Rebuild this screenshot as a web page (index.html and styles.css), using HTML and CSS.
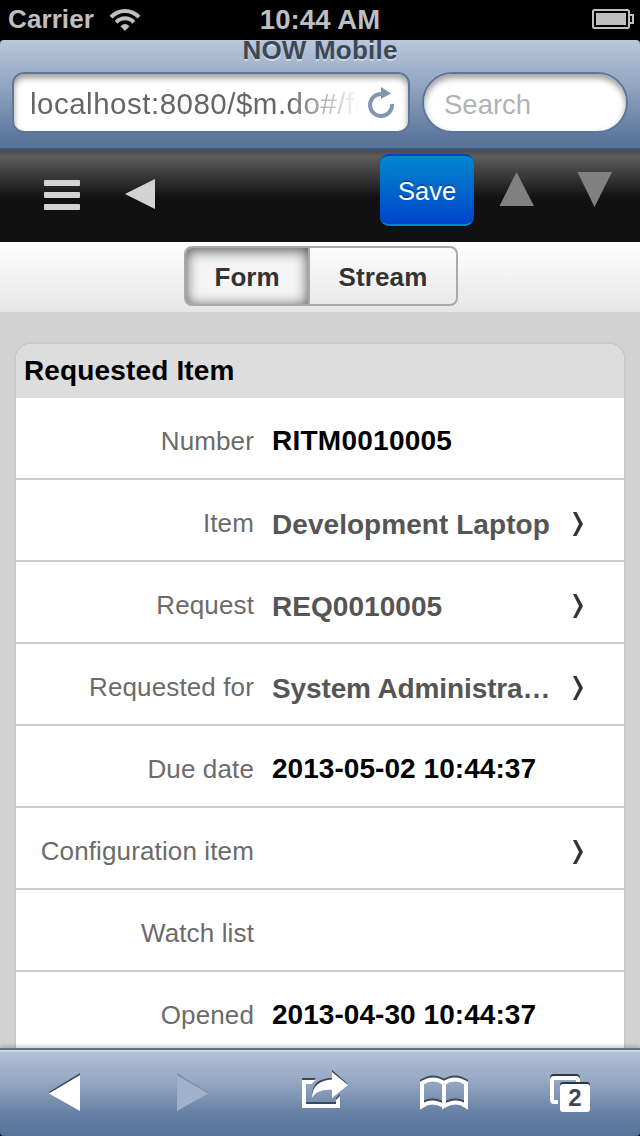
FILE: index.html
```
<!DOCTYPE html>
<html lang="en">
<head>
<meta charset="utf-8">
<title>NOW Mobile</title>
<link rel="stylesheet" href="styles.css">
</head>
<body>
<div class="screen">
  <header class="status">
    <div class="status-left"><span class="carrier">Carrier</span>
      <svg class="wifi" width="32" height="24" viewBox="0 0 32 24"><g fill="none" stroke="#bfbfbf" stroke-width="4"><path d="M2 9.2C9.500 .8 22.500 .8 30 9.200"/><path d="M7.200 14.300C12 9 20 9 24.800 14.300"/></g><path fill="#bfbfbf" d="M11.500 18.200Q16 13.800 20.500 18.200L16 23z"/></svg>
    </div>
    <span class="clock">10:44 AM</span>
    <svg class="battery" width="42" height="20" viewBox="0 0 42 20"><rect x="1" y="1" width="36" height="18" rx="1.500" fill="none" stroke="#bfbfbf" stroke-width="2"/><rect x="4" y="4" width="30" height="12" fill="#bfbfbf"/><path d="M38 6h3v8h-3" fill="none" stroke="#bfbfbf" stroke-width="2"/></svg>
  </header>
  <section class="chrome">
    <div class="page-title"><span>NOW Mobile</span></div>
    <div class="fields">
      <div class="field url"><span class="url-text">localhost:8080/$m.do#/fo</span>
        <svg class="reload" width="28" height="32" viewBox="0 0 28 32"><path d="M14 7A11 11 0 1 0 25 17" fill="none" stroke="#8196b0" stroke-width="4"/><path d="M14 0L24 6.500L14 12z" fill="#8196b0"/></svg>
      </div>
      <div class="field search"><span>Search</span></div>
    </div>
  </section>
  <nav class="toolbar">
    <svg class="menu" width="36" height="30" viewBox="0 0 36 30" fill="#d3d3d3"><rect width="36" height="6" rx="1"/><rect y="12" width="36" height="6" rx="1"/><rect y="24" width="36" height="6" rx="1"/></svg>
    <svg class="back" width="30" height="30" viewBox="0 0 30 30"><path d="M0 15L30 0V30z" fill="#d3d3d3"/></svg>
    <div class="save">Save</div>
    <svg class="up" width="36" height="36" viewBox="0 0 36 36"><path d="M.5 34L17.500 0L35 34z" fill="#808080"/></svg>
    <svg class="down" width="36" height="36" viewBox="0 0 36 36"><path d="M.5 0L17.500 35L35 0z" fill="#808080"/></svg>
  </nav>
  <div class="tabs"><div class="segments"><div class="tab active"><span>Form</span></div><div class="tab stream"><span>Stream</span></div></div></div>
  <main class="content">
    <section class="card">
      <h2><span>Requested Item</span></h2>
      <div class="row"><div class="label"><span>Number</span></div><div class="value"><span class="code">RITM0010005</span></div></div>
      <div class="row link"><div class="label"><span>Item</span></div><div class="value"><span>Development Laptop</span></div><svg class="chevron" width="12" height="24" viewBox="0 0 12 24"><path d="M0 0H3.500L10 12L3.500 24H0L6 12z"/></svg></div>
      <div class="row link"><div class="label"><span>Request</span></div><div class="value"><span>REQ0010005</span></div><svg class="chevron" width="12" height="24" viewBox="0 0 12 24"><path d="M0 0H3.500L10 12L3.500 24H0L6 12z"/></svg></div>
      <div class="row link"><div class="label"><span>Requested for</span></div><div class="value"><span class="person">System Administra…</span></div><svg class="chevron" width="12" height="24" viewBox="0 0 12 24"><path d="M0 0H3.500L10 12L3.500 24H0L6 12z"/></svg></div>
      <div class="row"><div class="label"><span>Due date</span></div><div class="value"><span>2013-05-02 10:44:37</span></div></div>
      <div class="row link"><div class="label"><span>Configuration item</span></div><div class="value"></div><svg class="chevron" width="12" height="24" viewBox="0 0 12 24"><path d="M0 0H3.500L10 12L3.500 24H0L6 12z"/></svg></div>
      <div class="row"><div class="label"><span>Watch list</span></div><div class="value"></div></div>
      <div class="row"><div class="label"><span>Opened</span></div><div class="value"><span>2013-04-30 10:44:37</span></div></div>
    </section>
  </main>
  <footer class="bottom">
    <div class="tool"><svg width="32" height="40" viewBox="0 0 32 40"><path d="M1 19L32 0V10L4 21z" fill="#3c4858"/><path d="M1 20.500L32 2V38z" fill="#fff"/></svg></div>
    <div class="tool"><svg width="32" height="40" viewBox="0 0 32 40"><path d="M1 0L31 19V21L1 4z" fill="#788ba8"/><path d="M1 2L32 20.500L1 38z" fill="#a1b1c9"/></svg></div>
    <div class="tool share"><svg width="48" height="40" viewBox="0 0 48 40"><g fill="#3c4858"><path d="M2 8H16L12 12H6V32H36V28L40 24V36H2z"/><path d="M12 26C12 14 19 8 32 8V0L48 14L32 26V18C22 17 15 19 12 26z"/></g><g fill="#fff"><path d="M2 10H15.500L11.500 14H6V34H36V30L40 26V38H2z"/><path d="M12 28C12 16 20 10 32 9.500V2L48 15L32 28V20C23 19 15 22 12 28z"/></g></svg></div>
    <div class="tool book"><svg width="48" height="36" viewBox="0 0 48 36"><g fill="none" stroke-width="4"><path stroke="#3c4858" d="M24 29Q12 22 2 29V6Q13-1 24 6Q35-1 46 6V29Q36 22 24 29V6"/><path stroke="#fff" d="M24 31Q12 24 2 31V8Q13 1 24 8Q35 1 46 8V31Q36 24 24 31V8"/></g></svg></div>
    <div class="tool pages"><svg width="40" height="40" viewBox="0 0 40 40"><path d="M2 26V4Q2 2 4 2H26Q28 2 28 4V8" fill="none" stroke="#2e3540" stroke-width="4"/><path d="M8 28H4Q2 28 2 26V6Q2 4 4 4H26Q28 4 28 6V8" fill="none" stroke="#fff" stroke-width="4"/><rect x="10" y="8" width="30" height="29" rx="3" fill="#2e3540"/><rect x="10" y="10" width="30" height="28" rx="3" fill="#fff"/><text x="25" y="32" class="count" text-anchor="middle">2</text></svg></div>
  </footer>
</div>
</body>
</html>
```
FILE: styles.css
```
* { box-sizing: border-box; }
body { margin: 0; background: #000; font-family: "Liberation Sans", Arial, sans-serif; }
svg { display: block; flex: none; }
span { white-space: nowrap; }
.screen { width: 640px; height: 1136px; display: flex; flex-direction: column; overflow: hidden; background: #000; }
.status { flex: none; height: 40px; display: grid; grid-template-columns: 1fr auto 1fr; align-items: center; padding: 0 6px 2px 8px; color: #bfbfbf; font-size: 26px; font-weight: bold; }
.status-left { display: flex; align-items: center; gap: 15px; letter-spacing: .1px; padding-top: 1px; }
.clock { font-size: 27.5px; letter-spacing: .1px; padding: 1px 2px 0 0; }
.battery { justify-self: end; }
.chrome { flex: none; height: 110px; border-radius: 4px 4px 0 0; background: linear-gradient(#b9c8dc, #8fa3bf 45%, #5b759b 92%, #58739a); border-bottom: 2px solid #3a5880; }
.page-title { height: 32px; line-height: 20px; text-align: center; font-size: 26px; font-weight: bold; letter-spacing: .2px; color: #3c4854; text-shadow: 0 2px 0 rgba(255,255,255,.45); }
.fields { display: flex; gap: 12px; padding: 0 12px; }
.field { height: 61px; border: 2px solid #5c7699; background: #fff; box-shadow: inset 0 4px 6px rgba(0,0,0,.4); display: flex; align-items: center; }
.url { width: 398px; border-radius: 12px; padding-left: 16px; font-size: 29.5px; color: #666; }
.url-text { width: 330px; padding-top: 3px; overflow: hidden; flex: none; letter-spacing: .5px; -webkit-mask-image: linear-gradient(90deg, #000 78%, transparent 100%); mask-image: linear-gradient(90deg, #000 78%, transparent 100%); }
.reload { margin: 1px 0 0 7px; }
.search { width: 206px; border-radius: 31px; padding: 4px 0 0 20px; font-size: 27.5px; color: #b3b3b3; }
.toolbar { flex: none; height: 92px; background: linear-gradient(#4a4a4a, #5c5c5c 7%, #111 52%, #111); display: flex; align-items: flex-start; }
.menu { margin: 30px 0 0 44px; }
.back { margin: 29px 0 0 45px; }
.save { width: 94px; height: 72px; margin: 4px 0 0 225px; border-radius: 9px; border-top: 2px solid #04c; border-bottom: 2px solid #08c; background: linear-gradient(#08c, #04c); color: #fff; font-size: 25.5px; line-height: 71px; text-align: center; text-shadow: 0 -2px 0 rgba(0,0,0,.25); }
.up { margin: 22px 0 0 25px; }
.down { margin: 22px 0 0 42px; }
.tabs { flex: none; height: 70px; padding-top: 4px; background: linear-gradient(#fff, #e6e6e6); display: flex; justify-content: center; }
.segments { width: 274px; height: 60px; margin-left: 2px; border: 2px solid #a9a9a9; border-radius: 8px; display: flex; overflow: hidden; font-size: 26px; font-weight: bold; color: #333; line-height: 58px; text-align: center; text-shadow: 0 2px 1px rgba(255,255,255,.75); }
.active { width: 124px; border-right: 2px solid #a9a9a9; background: #f5f5f5; box-shadow: inset 0 2px 14px rgba(0,0,0,.7); }
.stream { flex: 1; letter-spacing: .1px; }
.content { flex: 1; min-height: 0; overflow: hidden; padding: 30px 14px 0; background: #d3d3d3; }
.card { border: 2px solid #cbcbcb; border-radius: 18px 18px 0 0; overflow: hidden; background: #fff; }
.card h2 { margin: 0; height: 54px; padding-left: 8px; background: #ddd; font-size: 28px; letter-spacing: .15px; line-height: 53px; color: #000; }
.row { display: grid; grid-template-columns: 238px 282px 12px; column-gap: 18px; height: 82px; border-bottom: 2px solid #cbcbcb; line-height: 84px; }
.label { text-align: right; font-size: 26px; letter-spacing: .13px; color: #6b6b6b; padding-top: 1px; }
.value { font-size: 28px; font-weight: bold; letter-spacing: .05px; color: #000; padding-top: 1px; }
.code { letter-spacing: .25px; }
.person { letter-spacing: -.12px; }
.link .value { color: #555; padding-top: 3px; }
.chevron { margin: 32px 0 0 1px; fill: #333; }
.bottom { flex: none; height: 88px; display: grid; grid-template-columns: repeat(5, 1fr); border-top: 2px solid #5c708c; border-radius: 0 0 4px 4px; box-shadow: inset 0 2px 0 #cbd4e2, 0 -2px 4px rgba(0,0,0,.2); background: linear-gradient(#b3c1d7, #97a9c4 35%, #647fa2 75%, #5a739b); position: relative; }
.tool { display: flex; justify-content: center; align-items: center; }
.share { padding: 0 0 6px 8px; }
.book { padding-right: 8px; }
.pages { padding: 2px 12px 0 0; }
.count { font: bold 24px "Liberation Sans", Arial, sans-serif; fill: #3c4858; }
```
